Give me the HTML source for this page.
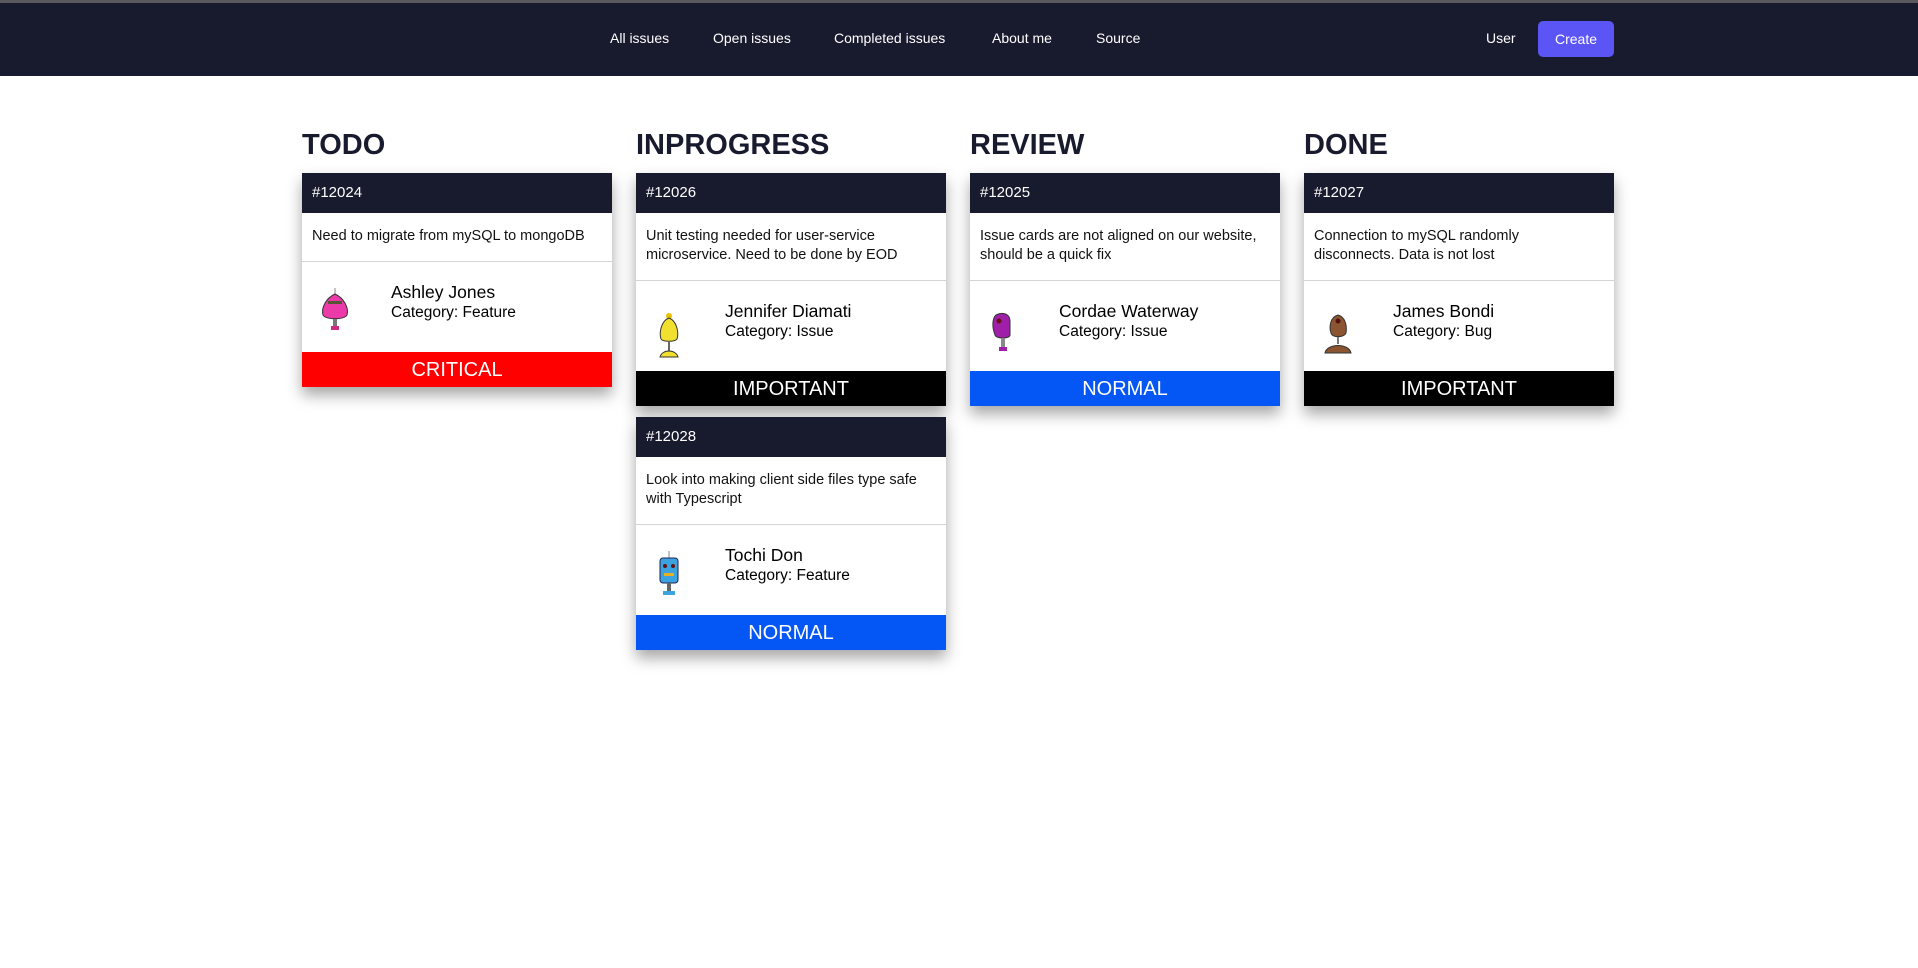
<!DOCTYPE html>
<html><head><meta charset="utf-8"><style>
*{box-sizing:border-box;margin:0;padding:0}
body{width:1918px;height:968px;background:#fff;font-family:"Liberation Sans",Arial,sans-serif;position:relative;overflow:hidden}
.top{position:absolute;left:0;top:0;width:1918px;height:3px;background:#5a5a5e}
nav{position:absolute;left:0;top:3px;width:1918px;height:73px;background:#181a2e;color:#fff;font-size:14px}
nav a{position:absolute;top:27px;color:#fff;text-decoration:none}
.btn{position:absolute;left:1538px;top:18px;width:76px;height:36px;background:#5b55f6;border-radius:5px;text-align:center;line-height:36px}
.col{position:absolute;top:129px;width:310px}
.col h2{font-size:29px;font-weight:bold;color:#181a2e;height:44px;line-height:32px}
.card{width:310px;background:#fff;box-shadow:0 8px 14px rgba(0,0,0,.35);margin-bottom:11px}
.hd{height:40px;background:#181a2e;color:#fff;font-size:15px;line-height:40px;padding-left:10px}
.ds{padding:14px 20px 0 10px;font-size:14.5px;line-height:18.5px;color:#111;border-bottom:1px solid #d4d4d4}
.ds.one{height:49px}.ds.two{height:68px}
.au{height:90px;position:relative}
.au svg{position:absolute;left:18px;top:26px}
.nm{position:absolute;left:89px;top:20px;font-size:17.5px;color:#000}
.ct{position:absolute;left:89px;top:42px;font-size:15.5px;color:#000}
.pr{height:35px;color:#fff;font-size:20px;text-align:center;line-height:37px}
</style></head><body>
<div class="top"></div>
<nav>
<a style="left:610px">All issues</a>
<a style="left:713px">Open issues</a>
<a style="left:834px">Completed issues</a>
<a style="left:992px">About me</a>
<a style="left:1096px">Source</a>
<a style="left:1486px">User</a>
<div class="btn">Create</div>
</nav>

<div class="col" style="left:302px"><h2>TODO</h2>
<div class="card"><div class="hd">#12024</div><div class="ds one">Need to migrate from mySQL to mongoDB</div>
<div class="au"><svg width="30" height="46" viewBox="0 0 30 46"><line x1="15" y1="0" x2="15" y2="8" stroke="#888"/><path d="M15 6 C24 10 29 20 27 27 C25 32 5 32 3 27 C1 20 6 10 15 6Z" fill="#ec3aa8" stroke="#333"/><rect x="8" y="13" width="14" height="3" fill="#553"/><rect x="13" y="31" width="4" height="8" fill="#777"/><rect x="11" y="38" width="8" height="4" fill="#d0288a"/></svg>
<div class="nm">Ashley Jones</div><div class="ct">Category: Feature</div></div>
<div class="pr" style="background:#ff0000">CRITICAL</div></div>
</div>

<div class="col" style="left:636px"><h2>INPROGRESS</h2>
<div class="card"><div class="hd">#12026</div><div class="ds two">Unit testing needed for user-service microservice. Need to be done by EOD</div>
<div class="au"><svg width="30" height="48" viewBox="0 0 30 48" style="top:30px"><circle cx="15" cy="5" r="3" fill="#e9c000"/><path d="M15 7 C23 10 25 22 23 28 C21 31 9 31 7 28 C5 22 7 10 15 7Z" fill="#f2e030" stroke="#333"/><line x1="15" y1="30" x2="15" y2="40" stroke="#666" stroke-width="2"/><path d="M6 46 C8 38 22 38 24 46Z" fill="#f2e030" stroke="#333"/></svg>
<div class="nm">Jennifer Diamati</div><div class="ct">Category: Issue</div></div>
<div class="pr" style="background:#000">IMPORTANT</div></div>
<div class="card"><div class="hd">#12028</div><div class="ds two">Look into making client side files type safe with Typescript</div>
<div class="au"><svg width="30" height="46" viewBox="0 0 30 46" style="top:26px"><line x1="15" y1="0" x2="15" y2="8" stroke="#888"/><rect x="6" y="7" width="18" height="25" rx="3" fill="#3ba3e0" stroke="#225"/><circle cx="11" cy="15" r="2" fill="#611"/><circle cx="19" cy="15" r="2" fill="#611"/><rect x="10" y="22" width="10" height="3" fill="#e8b020"/><rect x="13" y="32" width="4" height="9" fill="#666"/><rect x="9" y="40" width="12" height="4" fill="#3ba3e0"/></svg>
<div class="nm">Tochi Don</div><div class="ct">Category: Feature</div></div>
<div class="pr" style="background:#0457f4">NORMAL</div></div>
</div>

<div class="col" style="left:970px"><h2>REVIEW</h2>
<div class="card"><div class="hd">#12025</div><div class="ds two">Issue cards are not aligned on our website, should be a quick fix</div>
<div class="au"><svg width="30" height="46" viewBox="0 0 30 46" style="top:30px"><path d="M8 4 C16 0 22 4 22 10 L22 24 C22 28 8 28 7 24 C4 16 4 8 8 4Z" fill="#a01fa8" stroke="#333"/><circle cx="11" cy="10" r="2.5" fill="#611"/><rect x="13" y="27" width="4" height="10" fill="#888"/><rect x="11" y="36" width="8" height="4" fill="#a01fa8"/></svg>
<div class="nm">Cordae Waterway</div><div class="ct">Category: Issue</div></div>
<div class="pr" style="background:#0457f4">NORMAL</div></div>
</div>

<div class="col" style="left:1304px"><h2>DONE</h2>
<div class="card"><div class="hd">#12027</div><div class="ds two">Connection to mySQL randomly disconnects. Data is not lost</div>
<div class="au"><svg width="34" height="46" viewBox="0 0 34 46" style="top:32px"><path d="M16 2 C24 4 25 14 24 20 C22 25 10 25 9 20 C7 14 8 4 16 2Z" fill="#8a5530" stroke="#333"/><circle cx="16" cy="8" r="2.5" fill="#511"/><line x1="16" y1="24" x2="16" y2="31" stroke="#777" stroke-width="2"/><path d="M3 40 C5 30 27 30 29 40Z" fill="#8a5530" stroke="#333"/></svg>
<div class="nm">James Bondi</div><div class="ct">Category: Bug</div></div>
<div class="pr" style="background:#000">IMPORTANT</div></div>
</div>
</body></html>
